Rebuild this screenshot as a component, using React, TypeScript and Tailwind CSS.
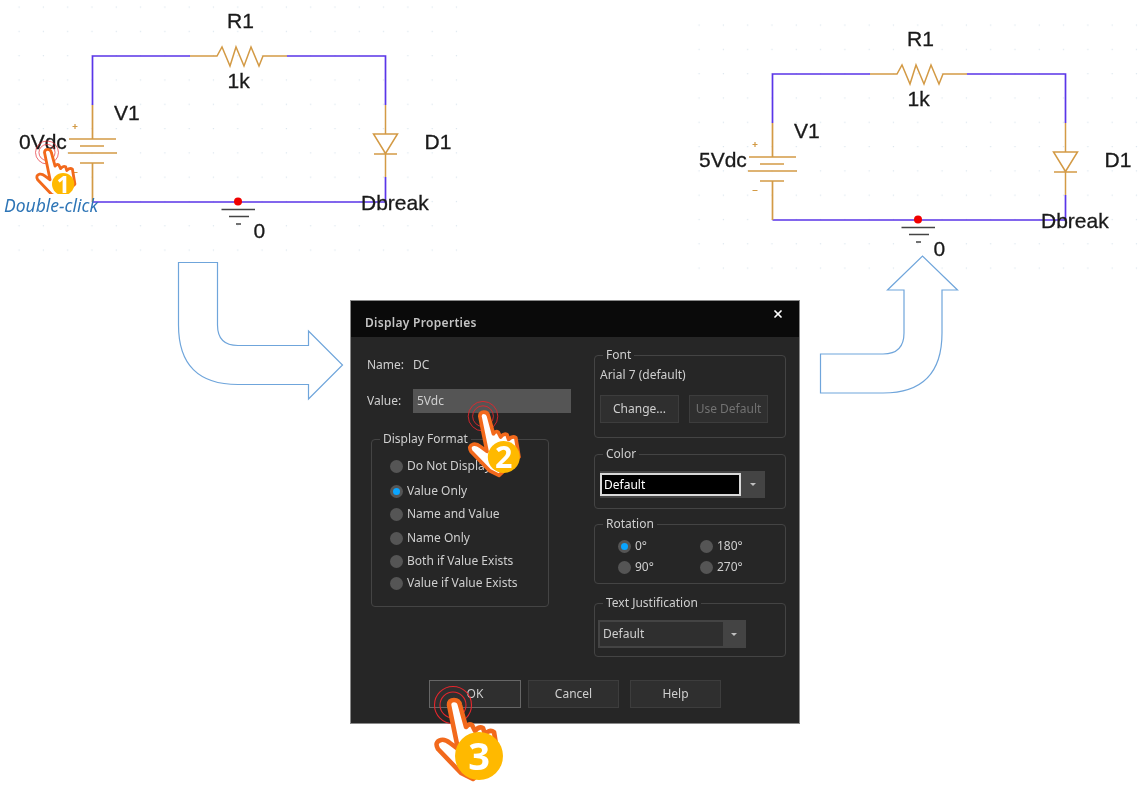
import { X } from 'lucide-react';

const WIRE = '#5a35e8';
const PART = '#d39a45';

function Schematic({ value, className }: { value: string; className: string }) {
  const labelClass = 'fill-[#1a1a1a] stroke-[#1a1a1a] stroke-[0.3px] text-[21px] font-["Liberation_Sans",sans-serif]';
  return (
    <svg width="470" height="262" className={className}>
      <defs>
        <pattern id={`dots-${value}`} x="7" y="6.5" width="24.3" height="24.3" patternUnits="userSpaceOnUse">
          <rect x="11.5" y="0" width="1.2" height="1.2" fill="#dbe6ee" />
        </pattern>
      </defs>
      <rect x="10" y="0" width="450" height="255" fill={`url(#dots-${value})`} />

      {/* wires */}
      <path d="M92.5 105 V56 H190 M287 56 H385.5 V105 M385.5 177 V202 H92.5" fill="none" stroke={WIRE} strokeWidth="1.7" />

      {/* resistor */}
      <path d="M190 56 H217 L222 47 L230 66 L236 47 L244 66 L251 47 L259 66 L263 56 H287" fill="none" stroke={PART} strokeWidth="1.5" />

      {/* source */}
      <path d="M92.5 105 V139 M69 139 H116 M80 146 H104 M68 153 H117 M80 163 H104 M92.5 163 V202" fill="none" stroke={PART} strokeWidth="1.7" />
      <path d="M72.5 126.5 H77.5 M75 124 V129 M72.5 172.5 H77.5" fill="none" stroke={PART} strokeWidth="1.2" />

      {/* diode */}
      <path d="M385.5 105 V134 M373.5 134 H397.5 L385.5 153.5 Z M374 154 H397 M385.5 154 V177" fill="none" stroke={PART} strokeWidth="1.5" />

      {/* ground */}
      <circle cx="238" cy="201.5" r="4" fill="#f00000" />
      <path d="M221.5 209.5 H255 M229 216.5 H249 M236 224 H241" fill="none" stroke="#444444" strokeWidth="1.6" />

      <text x="227" y="27.5" className={labelClass}>R1</text>
      <text x="227.5" y="88" className={labelClass}>1k</text>
      <text x="114" y="120" className={labelClass}>V1</text>
      <text x="19" y="149" className={labelClass}>{value}</text>
      <text x="424.5" y="149" className={labelClass}>D1</text>
      <text x="361" y="210" className={labelClass}>Dbreak</text>
      <text x="253.5" y="238" className={labelClass}>0</text>
    </svg>
  );
}

function Hand({ step, scale, badge, className }: { step: string; scale: number; badge: number; className: string }) {
  // drawn at full size around the fingertip, then scaled down per step
  return (
    <svg width="100" height="110" viewBox="-30 -24 100 110" className={className}>
      <g transform={`scale(${scale})`}>
        <circle cx="0" cy="4" r="18.5" fill="none" stroke="#e5262c" strokeWidth="1.1" />
        <circle cx="0" cy="4" r="13" fill="none" stroke="#e5262c" strokeWidth="1.1" />
        <path
          d="M-4 4 Q-4 -1 1 -1 Q6 -1 7 4 L13 26 Q16 22 19 24 L22 30 Q26 25 30 27 L32 33 Q37 28 41 31 L45 55 L20 78 L8 72 L-15 48 Q-19 41 -12 39 Q-8 38 -3 42 L5 48 Z"
          fill="#ffffff"
          stroke="#f2691c"
          strokeWidth="4.6"
          strokeLinejoin="round"
        />
        <circle cx="26" cy="55" r={badge} fill="#ffb900" />
        <text x="26" y="55" dy="0.36em" textAnchor="middle" fill="#ffffff" className='text-[38px] font-bold font-["Open_Sans",sans-serif]'>
          {step}
        </text>
      </g>
    </svg>
  );
}

function Radio({ label, on, className = '' }: { label: string; on?: boolean; className?: string }) {
  return (
    <div className={`flex h-[16px] items-center gap-[4px] ${className}`}>
      <span className="flex h-[13px] w-[13px] items-center justify-center rounded-full bg-[#555555]">
        {on && <span className="h-[7px] w-[7px] rounded-full bg-[#0aa5ff]" />}
      </span>
      <span className="whitespace-nowrap">{label}</span>
    </div>
  );
}

function Group({ title, className, children }: { title: string; className: string; children: React.ReactNode }) {
  return (
    <fieldset className={`rounded-[4px] border border-[#444444] ${className}`}>
      <legend className="ml-[8px] px-[3px] leading-[16px]">{title}</legend>
      {children}
    </fieldset>
  );
}

function Arrow({ d, className }: { d: string; className: string }) {
  return (
    <svg width="200" height="150" className={className}>
      <path d={d} fill="#ffffff" stroke="#6fa5db" strokeWidth="1.2" />
    </svg>
  );
}

function Caret({ className }: { className: string }) {
  return <span className={`h-0 w-0 border-x-[3px] border-t-[3px] border-x-transparent border-t-[#c0c0c0] ${className}`} />;
}

function Dialog() {
  const btn = 'h-[28px] border border-[#3d3d3d] bg-[#2f2f2f]';
  return (
    <div className='absolute left-[350px] top-[300px] flex h-[424px] w-[450px] flex-col border border-[#8a8a8a] bg-[#262626] text-[12px] leading-[16px] text-[#cfcfcf] font-["Noto_Sans",sans-serif]'>
      {/* title bar */}
      <div className="flex h-[36px] items-start justify-between bg-[#0a0a0a] pl-[14px] pr-[15px]">
        <span className="mt-[14px] font-semibold tracking-[0.3px] text-[#c4c4c4]">Display Properties</span>
        <X size={12} strokeWidth={3.5} className="mt-[7px] text-white" />
      </div>

      <div className="flex h-[320px]">
        {/* left column */}
        <div className="ml-[16px] w-[204px] pt-[20px]">
          <div className="flex h-[16px] items-center">
            <span className="w-[46px]">Name:</span>
            <span>DC</span>
          </div>
          <div className="mt-[16px] flex h-[24px] items-center">
            <span className="w-[46px]">Value:</span>
            <div className="flex h-[24px] flex-1 items-center bg-[#555555] px-[4px]">5Vdc</div>
          </div>
          <Group title="Display Format" className="ml-[4px] mt-[18px] h-[176px] w-[178px]">
            <div className="pl-[18px]">
              <Radio label="Do Not Display" className="mt-[11px]" />
              <Radio label="Value Only" on className="mt-[9px]" />
              <Radio label="Name and Value" className="mt-[7px]" />
              <Radio label="Name Only" className="mt-[8px]" />
              <Radio label="Both if Value Exists" className="mt-[7px]" />
              <Radio label="Value if Value Exists" className="mt-[6px]" />
            </div>
          </Group>
        </div>

        {/* right column */}
        <div className="ml-[23px] w-[192px] pt-[10px]">
          <Group title="Font" className="h-[91px]">
            <div className="ml-[5px] mt-[4px] h-[16px]">Arial 7 (default)</div>
            <div className="ml-[5px] mt-[12px] flex gap-[10px]">
              <div className={`flex w-[79px] items-center justify-center ${btn}`}>Change...</div>
              <div className={`flex w-[79px] items-center justify-center text-[#727272] ${btn}`}>Use Default</div>
            </div>
          </Group>

          <Group title="Color" className="mt-[8px] h-[63px]">
            <div className="ml-[5px] mt-[9px] flex h-[27px] w-[165px] items-center bg-[#444444]">
              <div className="flex h-[23px] w-[141px] items-center border-2 border-[#d8d8d8] bg-black px-[2px] text-white">Default</div>
              <Caret className="ml-[9px]" />
            </div>
          </Group>

          <Group title="Rotation" className="mt-[7px] h-[68px]">
            <div className="ml-[23px] mt-[6px] grid grid-cols-[82px_82px] gap-y-[5px]">
              <Radio label="0°" on />
              <Radio label="180°" />
              <Radio label="90°" />
              <Radio label="270°" />
            </div>
          </Group>

          <Group title="Text Justification" className="mt-[11px] h-[62px]">
            <div className="ml-[3px] mt-[9px] flex h-[28px] w-[148px] items-center bg-[#444444]">
              <div className="ml-[2px] flex h-[24px] w-[123px] items-center bg-[#2f2f2f] px-[3px]">Default</div>
              <Caret className="ml-[8px]" />
            </div>
          </Group>
        </div>
      </div>

      {/* footer */}
      <div className="ml-[78px] mt-[23px] flex">
        <div className={`flex w-[92px] items-center justify-center !border-[#666666] ${btn}`}>OK</div>
        <div className={`ml-[7px] flex w-[91px] items-center justify-center ${btn}`}>Cancel</div>
        <div className={`ml-[11px] flex w-[91px] items-center justify-center ${btn}`}>Help</div>
      </div>
    </div>
  );
}

export default function App() {
  return (
    <div className="relative h-[786px] w-[1140px] overflow-hidden bg-white blur-[0.3px]">
      <Schematic value="0Vdc" className="absolute left-0 top-0" />
      <Schematic value="5Vdc" className="absolute left-[680px] top-[18px]" />

      <Arrow
        className="absolute left-[170px] top-[255px]"
        d="M8.5 7.5 H47.5 V70 Q47.5 90.5 68 90.5 H138.5 V76 L172.5 110 L138.5 144 V129.5 H68 Q8.5 129.5 8.5 70 Z"
      />
      <Arrow
        className="absolute left-[800px] top-[250px]"
        d="M20.5 143 V104 H83 Q104 104 104 83 V40 H87.5 L122.5 6 L157.5 40 H142 V83 Q142 143 83 143 Z"
      />

      <Dialog />

      <Hand step="1" scale={0.62} badge={18} className="absolute left-[17px] top-[126px]" />
      <div className='absolute left-0 top-[194px] h-[22px] w-[91px] whitespace-nowrap bg-white pl-[4px] text-[17.5px] italic leading-[22px] text-[#2e75b6] font-["Noto_Sans",sans-serif]'>
        Double-click
      </div>
      <Hand step="2" scale={0.8} badge={20} className="absolute left-[453px] top-[389px]" />
      <Hand step="3" scale={1} badge={24} className="absolute left-[423px] top-[677px]" />
    </div>
  );
}
